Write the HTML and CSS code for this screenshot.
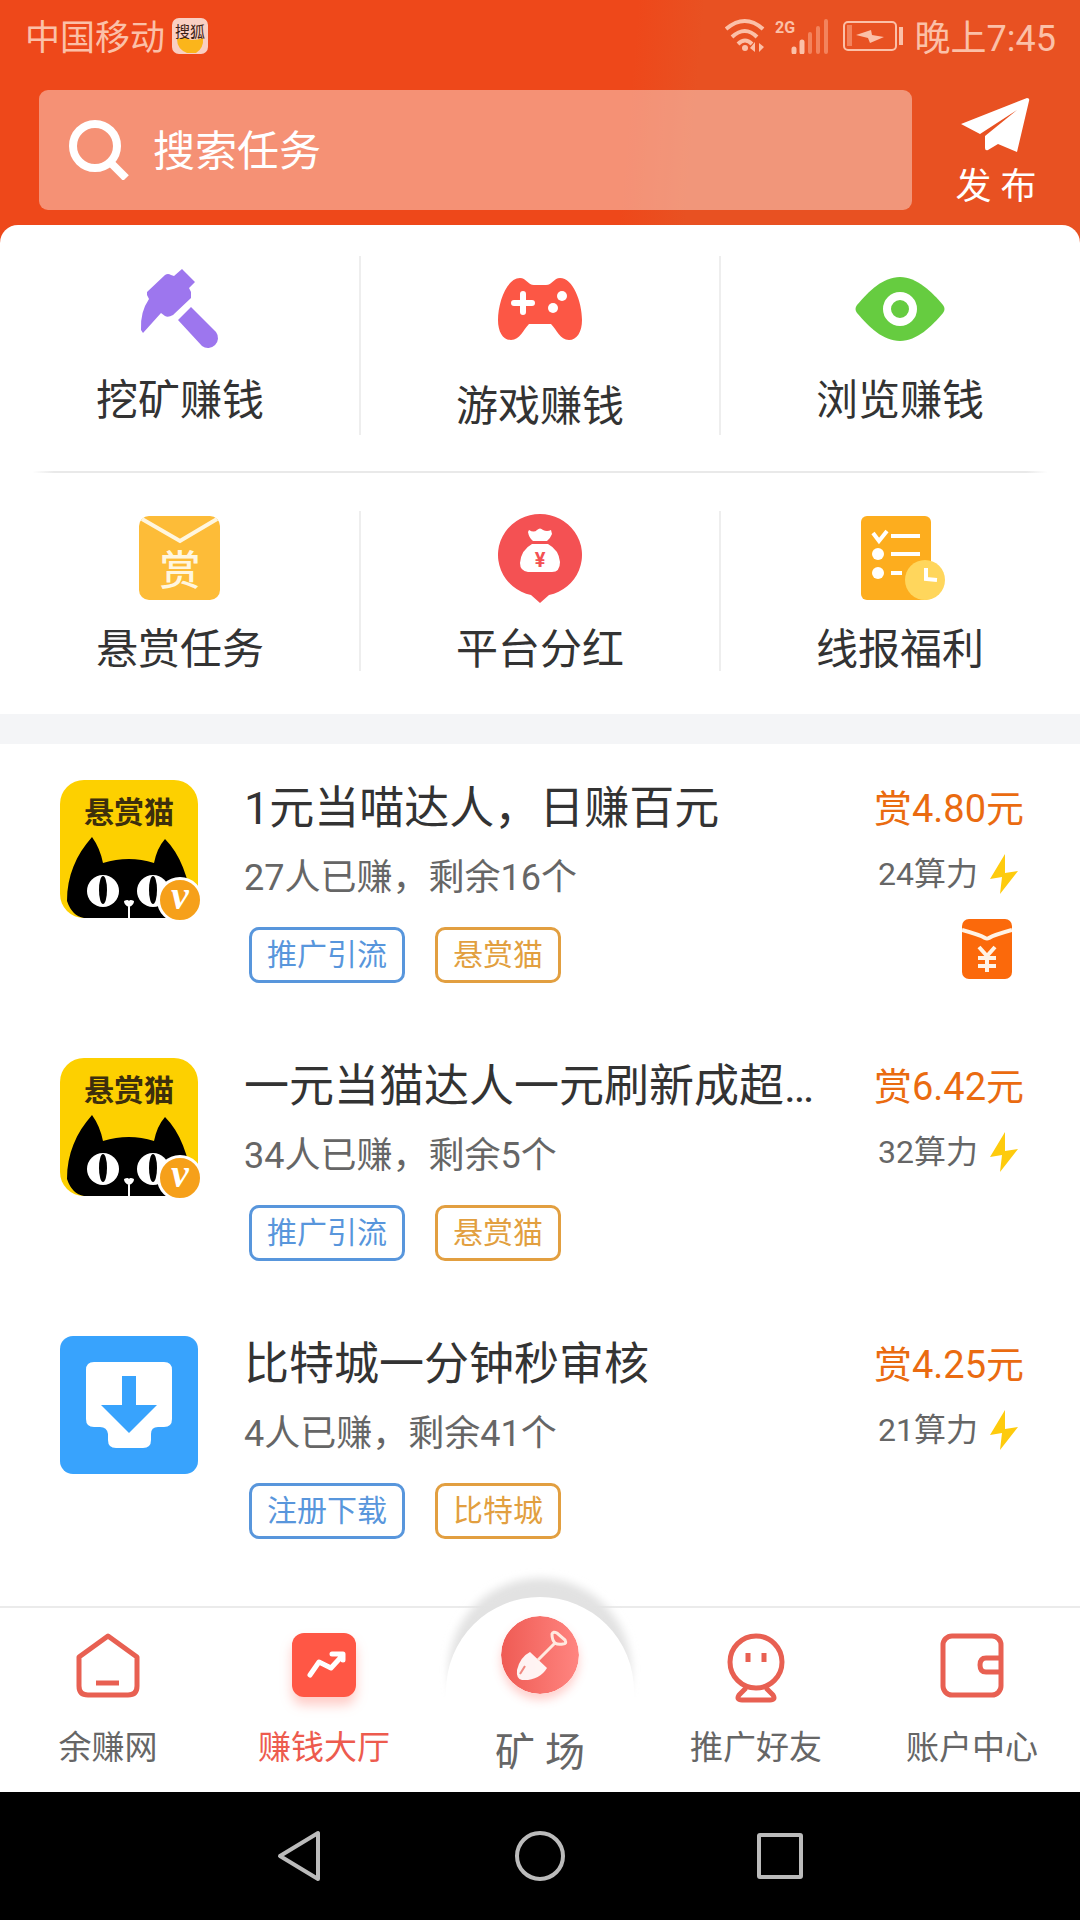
FILE: index.html
```html
<!DOCTYPE html>
<html lang="zh-CN">
<head>
<meta charset="utf-8">
<meta name="viewport" content="width=device-width, initial-scale=1">
<title>赚钱大厅</title>
<link rel="stylesheet" href="styles.css">
</head>
<body>
<div class="page">
  <header class="header">
    <div class="status">
      <span class="carrier">中国移动</span>
      <svg class="sohu" viewBox="0 0 36 36" aria-hidden="true">
        <rect width="36" height="36" rx="7" fill="#f9cfc3"/>
        <path d="M5 21q8-3 14 1q7 0 12-2q1 10-7 15h-9q-10-4-10-14Z" fill="#fbb51b"/>
        <text x="18" y="19" text-anchor="middle" font-size="15" fill="#3b1c14">搜狐</text>
      </svg>
      <span class="spacer"></span>
      <svg class="wifi" viewBox="0 0 40 36" fill="none" stroke="#fbc0a8" stroke-width="4" aria-hidden="true">
        <path d="M1 11Q20-5 38 11M7 19Q20 7 32 19M13 26Q20 19 27 26"/><circle cx="20" cy="30" r="3" fill="#fbc0a8" stroke="none"/>
        <path d="M30 24v10l-5-4ZM34 34V25l5 4Z" fill="#fbc0a8" stroke="none"/>
      </svg>
      <svg class="signal" viewBox="0 0 54 36" aria-hidden="true">
        <text x="0" y="15" font-size="16" font-weight="700" fill="#fbc0a8">2G</text>
        <path d="M19 34v-3M27 34v-10" stroke="#fbc0a8" stroke-width="5" stroke-linecap="round"/>
        <path d="M35 34V16M43 34V10M51 34V3" stroke="#f3835d" stroke-width="4" stroke-linecap="round"/>
      </svg>
      <svg class="battery" viewBox="0 0 62 30" aria-hidden="true">
        <rect x="1" y="1" width="52" height="28" rx="4" fill="none" stroke="#fbc0a8" stroke-width="2"/>
        <path d="M4 4h5v21H4Z" fill="#f3835d"/><path d="M56 6h4v18h-4Z" fill="#fbc0a8"/>
        <path d="M13 14L28 9L29 14L41 16L27 22L25 17Z" fill="#fbc0a8"/>
      </svg>
      <time>晚上7:45</time>
    </div>
    <div class="toolbar">
      <label class="search">
        <svg viewBox="0 0 60 60" aria-hidden="true"><circle cx="26" cy="26" r="22" fill="none" stroke="#fff" stroke-width="8"/><path d="M41 42L57 58" stroke="#fff" stroke-width="8"/></svg>
        <input type="search" placeholder="搜索任务" aria-label="搜索任务">
      </label>
      <button class="publish" type="button">
        <svg viewBox="0 0 70 54" aria-hidden="true"><path d="M0 26L66 0Q69 0 68 3L56 54L37 46L27 52Q24 53 24 50V38L56 12L19 36Z" fill="#fff"/></svg>
        <span>发 布</span>
      </button>
    </div>
  </header>

  <nav class="menu" aria-label="分类">
    <div class="menu-row">
      <a href="#mine"><svg class="icon" viewBox="0 0 90 90" fill="#9d76ee" aria-hidden="true"><path d="M47 5L60 18L54 24L56 28V34L38 51Q33 54 30 52L26 49L8 69L6 66Q5 48 14 35L12 31V28L30 11Q33 9 36 11L39 12Z"/><path d="M43 56L56 43L81 68A10 10 0 0 1 67 82Z"/></svg><span>挖矿赚钱</span></a>
      <a href="#game"><svg class="icon icon-tall" viewBox="0 0 90 96" aria-hidden="true"><path d="M25 14C31 14 33 21 39 21H51C57 21 59 14 65 14C78 14 87 38 87 56C87 68 82 76 74 76C65 76 62 66 56 60H34C28 66 25 76 16 76C8 76 3 68 3 56C3 38 12 14 25 14Z" fill="#fc5745"/><path d="M28 30V48M19 39H37" stroke="#fff" stroke-width="6" stroke-linecap="round"/><circle cx="67" cy="32" r="5" fill="#fff"/><circle cx="58" cy="44" r="5" fill="#fff"/></svg><span>游戏赚钱</span></a>
      <a href="#browse"><svg class="icon" viewBox="0 0 90 90" aria-hidden="true"><path d="M2 41C14 27 28 13 45 13S77 28 88 41Q91 45 88 49C77 62 62 77 45 77S14 63 2 49Q-1 45 2 41Z" fill="#66cc40"/><circle cx="45" cy="45" r="13" fill="none" stroke="#fff" stroke-width="8"/></svg><span>浏览赚钱</span></a>
    </div>
    <div class="menu-row">
      <a href="#reward"><svg class="icon" viewBox="0 0 90 90" aria-hidden="true"><rect x="4" y="3" width="81" height="84" rx="10" fill="#fdbc38"/><path d="M7 6L45 28L82 6" fill="none" stroke="#fff6df" stroke-width="4"/><text x="45" y="72" text-anchor="middle" font-size="41" font-weight="500" fill="#fff6df">赏</text></svg><span>悬赏任务</span></a>
      <a href="#dividend"><svg class="icon" viewBox="0 0 90 90" aria-hidden="true"><path d="M45 90L36 82A42 41 0 1 1 54 82Z" fill="#f45153"/><path d="M34 17q5 3 8 0q3-3 6 0q4 2 8 0l1 4q-2 5-5 7H38q-4-3-5-9ZM37 31H53Q64 37 65 49Q65 59 57 59H33Q25 58 25 50Q26 37 37 31Z" fill="#fff"/><text x="45" y="54" text-anchor="middle" font-size="20" font-weight="700" fill="#f45153">¥</text></svg><span>平台分红</span></a>
      <a href="#welfare"><svg class="icon" viewBox="0 0 90 90" aria-hidden="true"><rect x="6" y="3" width="70" height="84" rx="6" fill="#fdad1e"/><path d="M18 20L24 28L32 18M36 23H65M36 41H65M36 60H47" fill="none" stroke="#fff" stroke-width="4"/><circle cx="23" cy="41" r="6" fill="#fff"/><circle cx="23" cy="60" r="6" fill="#fff"/><circle cx="70" cy="67" r="20" fill="#ffd65c"/><path d="M71 55V66L82 67" fill="none" stroke="#fff" stroke-width="4"/></svg><span>线报福利</span></a>
    </div>
  </nav>

  <main class="tasks">
    <article class="task">
      <div class="logo">
        <svg viewBox="0 0 138 138" aria-hidden="true">
          <rect width="138" height="138" rx="24" fill="#fdd000"/>
          <path d="M7 121C7 96 16 75 32 57Q40 68 43 83Q69 75 94 83Q97 68 105 59C120 74 129 98 132 125Q126 138 114 138H24Q12 136 7 121Z" fill="#000"/>
          <circle cx="43" cy="111" r="16" fill="#fff"/><ellipse cx="43" cy="110" rx="4" ry="14" fill="#000"/>
          <circle cx="93" cy="111" r="16" fill="#fff"/><ellipse cx="93" cy="110" rx="4" ry="14" fill="#000"/>
          <path d="M64 121q4-2 5 0q1-2 5 0q0 4-5 6q-5-2-5-6ZM68 125h2v13h-2Z" fill="#fff"/>
          <text x="69" y="43" text-anchor="middle" font-size="30" font-weight="700" fill="#3d2f0c">悬赏猫</text>
        </svg>
        <span class="badge">v</span>
      </div>
      <div class="info">
        <h2>1元当喵达人，日赚百元</h2>
        <p>27人已赚，剩余16个</p>
        <div class="tags"><span class="tag blue">推广引流</span><span class="tag gold">悬赏猫</span></div>
      </div>
      <div class="reward">
        <strong>赏4.80元</strong>
        <span class="power">24算力<svg viewBox="0 0 28 40" aria-hidden="true"><path d="M15 0L0 25L12 23L10 40L28 17L15 19Z" fill="#fecb0d"/></svg></span>
        <svg class="packet" viewBox="0 0 50 60" aria-hidden="true"><rect width="50" height="60" rx="7" fill="#fb690b"/><path d="M0 11Q18 16 23 19Q25 20 27 19Q32 16 50 11M17 28L25 37L33 28M16 39H34M16 47H34M25 38V53" fill="none" stroke="#fff3e6" stroke-width="4"/></svg>
      </div>
    </article>
    <article class="task">
      <div class="logo">
        <svg viewBox="0 0 138 138" aria-hidden="true">
          <rect width="138" height="138" rx="24" fill="#fdd000"/>
          <path d="M7 121C7 96 16 75 32 57Q40 68 43 83Q69 75 94 83Q97 68 105 59C120 74 129 98 132 125Q126 138 114 138H24Q12 136 7 121Z" fill="#000"/>
          <circle cx="43" cy="111" r="16" fill="#fff"/><ellipse cx="43" cy="110" rx="4" ry="14" fill="#000"/>
          <circle cx="93" cy="111" r="16" fill="#fff"/><ellipse cx="93" cy="110" rx="4" ry="14" fill="#000"/>
          <path d="M64 121q4-2 5 0q1-2 5 0q0 4-5 6q-5-2-5-6ZM68 125h2v13h-2Z" fill="#fff"/>
          <text x="69" y="43" text-anchor="middle" font-size="30" font-weight="700" fill="#3d2f0c">悬赏猫</text>
        </svg>
        <span class="badge">v</span>
      </div>
      <div class="info">
        <h2>一元当猫达人一元刷新成超…</h2>
        <p>34人已赚，剩余5个</p>
        <div class="tags"><span class="tag blue">推广引流</span><span class="tag gold">悬赏猫</span></div>
      </div>
      <div class="reward">
        <strong>赏6.42元</strong>
        <span class="power">32算力<svg viewBox="0 0 28 40" aria-hidden="true"><path d="M15 0L0 25L12 23L10 40L28 17L15 19Z" fill="#fecb0d"/></svg></span>
      </div>
    </article>
    <article class="task">
      <div class="logo"><svg viewBox="0 0 138 138" aria-hidden="true"><rect width="138" height="138" rx="13" fill="#38a3fd"/><path d="M34 26H104Q112 26 112 34V83Q112 91 104 91H98Q91 91 91 98V104Q91 112 83 112H56Q48 112 48 104V98Q47 91 40 91H34Q26 91 26 83V34Q26 26 34 26Z" fill="#fff"/><path d="M62 40H76V69H97L69 97L41 69H62Z" fill="#38a3fd"/></svg></div>
      <div class="info">
        <h2>比特城一分钟秒审核</h2>
        <p>4人已赚，剩余41个</p>
        <div class="tags"><span class="tag blue">注册下载</span><span class="tag gold">比特城</span></div>
      </div>
      <div class="reward">
        <strong>赏4.25元</strong>
        <span class="power">21算力<svg viewBox="0 0 28 40" aria-hidden="true"><path d="M15 0L0 25L12 23L10 40L28 17L15 19Z" fill="#fecb0d"/></svg></span>
      </div>
    </article>
  </main>

  <nav class="tabs" aria-label="主导航">
    <a href="#home"><svg viewBox="0 0 64 72" fill="none" stroke="#e86052" stroke-width="5" stroke-linejoin="round" aria-hidden="true"><path d="M32 3L61 24V53Q61 62 52 62H12Q3 62 3 53V24Z"/><path d="M20 50H43"/></svg><span>余赚网</span></a>
    <a href="#hall" class="active" aria-current="page"><svg viewBox="0 0 64 72" aria-hidden="true"><rect width="64" height="64" rx="12" fill="#ff5745"/><path d="M18 42L27 29L39 35L50 23M40 21H51V27" fill="none" stroke="#fff" stroke-width="5" stroke-linecap="round" stroke-linejoin="round"/></svg><span>赚钱大厅</span></a>
    <a href="#field" class="center">
      <svg class="bump" viewBox="0 0 240 130" aria-hidden="true">
        <defs><filter id="soft" x="-20%" y="-20%" width="140%" height="140%"><feGaussianBlur stdDeviation="4"/></filter></defs>
        <circle cx="120" cy="102" r="91" fill="#e2e2e2" filter="url(#soft)"/><circle cx="120" cy="124" r="94" fill="#fff"/>
      </svg>
      <svg class="mine" viewBox="0 0 78 78" aria-hidden="true">
        <defs><linearGradient id="coral"><stop stop-color="#ef5b54"/><stop offset="1" stop-color="#ff8580"/></linearGradient></defs>
        <circle cx="39" cy="39" r="39" fill="url(#coral)"/>
        <path d="M29 36L46 52Q38 65 21 64Q15 63 16 54Q19 41 29 36Z" fill="#fff" fill-opacity=".92"/>
        <path d="M37 44L54 27M51 18Q52 15 56 17L64 24Q66 28 62 28Q57 29 54 27Q51 24 51 18Z" fill="none" stroke="#ffe9df" stroke-width="3"/><path d="M19 58L24 50" stroke="#f08880" stroke-width="2"/>
      </svg>
      <span>矿 场</span>
    </a>
    <a href="#friends"><svg viewBox="0 0 64 72" fill="none" stroke="#e86052" stroke-width="5" stroke-linejoin="round" aria-hidden="true"><circle cx="32" cy="29" r="26"/><path d="M24 20V29M40 20V29"/><path d="M22 55L15 62Q12 67 18 67H46Q52 67 49 62L42 55"/></svg><span>推广好友</span></a>
    <a href="#account"><svg viewBox="0 0 64 72" fill="none" stroke="#e86052" stroke-width="5" aria-hidden="true"><rect x="3" y="3" width="58" height="59" rx="9"/><path d="M61 25H46Q40 25 40 32T46 39H61"/></svg><span>账户中心</span></a>
  </nav>

  <footer class="system">
    <button type="button" aria-label="返回"><svg viewBox="0 0 52 52"><path d="M6 26L44 3V49Z"/></svg></button>
    <button type="button" aria-label="主屏幕"><svg viewBox="0 0 52 52"><circle cx="26" cy="26" r="23"/></svg></button>
    <button type="button" aria-label="最近任务"><svg viewBox="0 0 52 52"><rect x="5" y="5" width="42" height="42" rx="1"/></svg></button>
  </footer>
</div>
</body>
</html>
```
FILE: styles.css
```css
* { box-sizing: border-box; }

body {
  margin: 0;
  background: #fff;
  color: #333;
  font-family: Roboto, "Noto Sans CJK SC", sans-serif;
}

a { color: inherit; text-decoration: none; }
button { border: 0; padding: 0; background: none; color: inherit; font: inherit; }
svg { display: block; flex: none; }

.page {
  display: flex;
  flex-direction: column;
  min-height: 100vh;
}

/* header */
.header {
  padding-bottom: 34px;
  background: linear-gradient(95deg, #ee481a 58%, #e85122 64%);
  color: #fff;
}

.status {
  display: flex;
  align-items: center;
  height: 72px;
  padding: 0 24px 0 25px;
  color: #fbc0a8;
  font-size: 36px;
  line-height: 60px;
}

.carrier, .status time { padding-top: 6px; }
.carrier { font-size: 35px; }

.sohu { width: 36px; height: 36px; margin-left: 7px; }
.spacer { flex: 1; }
.wifi { width: 40px; height: 36px; margin-right: 10px; }
.signal { width: 54px; height: 36px; margin-right: 14px; }
.battery { width: 62px; height: 30px; margin-right: 10px; }

.toolbar {
  display: flex;
  padding: 18px 0 0 39px;
}

.search {
  display: flex;
  flex: 1;
  align-items: center;
  height: 120px;
  padding: 0 30px;
  gap: 24px;
  border-radius: 9px;
  background: rgba(255, 255, 255, .4);
}

.search svg { width: 60px; height: 60px; }

.search input {
  flex: 1;
  min-width: 0;
  padding: 4px 0 0;
  border: 0;
  outline: 0;
  background: none;
  color: #fff;
  font: inherit;
  font-size: 42px;
  line-height: 60px;
}

.search input::placeholder { color: #fff; opacity: 1; }

.publish {
  display: flex;
  flex-direction: column;
  align-items: center;
  width: 168px;
  padding-top: 8px;
  font-size: 36px;
  line-height: 46px;
}

.publish svg { width: 70px; height: 54px; margin-bottom: 12px; }

/* category menu */
.menu {
  margin-top: -19px;
  border-bottom: 30px solid #f4f5f7;
  border-radius: 18px 18px 0 0;
  background: #fff;
}

.menu-row {
  display: grid;
  grid-template-columns: repeat(3, 1fr);
  align-items: start;
  padding: 39px 0 36px;
  background:
    linear-gradient(#eee, #eee) 33.33% 31px / 2px 179px no-repeat,
    linear-gradient(#eee, #eee) 66.67% 31px / 2px 179px no-repeat,
    linear-gradient(90deg, transparent 3%, #e9e9e9 5%, #e9e9e9 95%, transparent 97%) bottom / 100% 2px no-repeat;
}

.menu-row + .menu-row {
  padding: 40px 0 34px;
  background:
    linear-gradient(#eee, #eee) 33.33% 38px / 2px 160px no-repeat,
    linear-gradient(#eee, #eee) 66.67% 38px / 2px 160px no-repeat;
}

.menu-row a {
  display: flex;
  flex-direction: column;
  align-items: center;
  gap: 17px;
  font-size: 42px;
  line-height: 60px;
}

.icon { width: 90px; height: 90px; }
.icon-tall { height: 96px; }

/* task list */
.tasks { flex: 1; }

.task {
  display: flex;
  align-items: flex-start;
  padding: 35px 56px 39px 60px;
}

.logo {
  position: relative;
  width: 138px;
  margin: 1px 46px 0 0;
}

.logo svg { width: 138px; height: 138px; }

.badge {
  position: absolute;
  right: -5px;
  bottom: -5px;
  width: 46px;
  height: 46px;
  border: 3px solid #fff;
  border-radius: 50%;
  background: #f6a01a;
  color: #fff;
  font: italic bold 40px/32px "Liberation Serif", serif;
  text-align: center;
}

.info { flex: 1; min-width: 0; }

.info h2 {
  margin: 0 0 15px;
  overflow: hidden;
  font-size: 45px;
  font-weight: 400;
  line-height: 60px;
  white-space: nowrap;
}

.info p {
  margin: 0 0 25px;
  color: #666;
  font-size: 36px;
  line-height: 48px;
}

.tags { display: flex; gap: 30px; padding-left: 5px; }

.tag {
  padding: 0 15px;
  border: 3px solid;
  border-radius: 10px;
  font-size: 30px;
  line-height: 50px;
}

.blue { color: #5896dc; }
.gold { color: #e29f40; }

.reward {
  display: flex;
  flex-direction: column;
  align-items: flex-end;
}

.reward strong {
  color: #ea6b10;
  font-size: 38px;
  font-weight: 400;
  line-height: 60px;
}

.power {
  display: flex;
  align-items: center;
  gap: 12px;
  margin: 11px 6px 0 0;
  color: #666;
  font-size: 32px;
  line-height: 48px;
}

.power svg { width: 28px; height: 40px; }
.packet { width: 50px; height: 60px; margin: 21px 12px 0 0; }

/* bottom tabs */
.tabs {
  display: grid;
  grid-template-columns: repeat(5, 1fr);
  height: 186px;
  border-top: 2px solid #ebebeb;
  background: #fff;
  color: #666;
  font-size: 33px;
  line-height: 40px;
}

.tabs a {
  display: flex;
  flex-direction: column;
  align-items: center;
  gap: 23px;
  padding-top: 25px;
}

.tabs a > svg { width: 64px; height: 72px; }
.tabs .active { color: #ed5b4e; }
.tabs .active svg { filter: drop-shadow(0 8px 6px rgba(255, 87, 69, .3)); }

.tabs .center {
  position: relative;
  gap: 39px;
  padding-top: 8px;
  font-size: 40px;
}

.tabs .center .bump {
  position: absolute;
  top: -41px;
  left: calc(50% - 120px);
  width: 240px;
  height: 130px;
}

.tabs .center .mine {
  position: relative;
  width: 78px;
  height: 78px;
  border-radius: 50%;
  box-shadow: 0 6px 10px rgba(255, 100, 90, .3);
}

/* system navigation */
.system {
  display: flex;
  justify-content: center;
  gap: 188px;
  height: 128px;
  background: #000;
}

.system svg {
  width: 52px;
  height: 52px;
  fill: none;
  stroke: #bbb;
  stroke-width: 4;
  stroke-linejoin: round;
}
```
